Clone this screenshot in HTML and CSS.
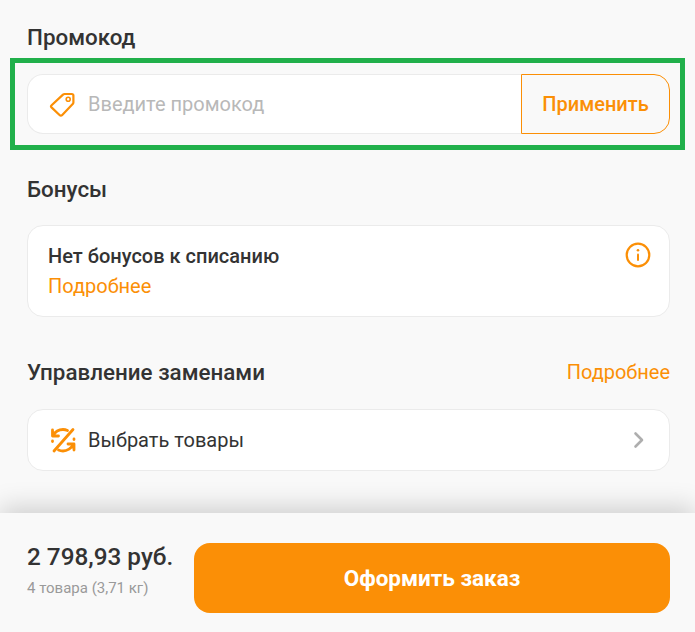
FILE: index.html
```html
<!DOCTYPE html>
<html lang="ru">
<head>
    <meta charset="UTF-8">
    <meta name="viewport" content="width=device-width, initial-scale=1.0">
    <title>Оформление заказа</title>
    <link rel="stylesheet" href="styles.css">
</head>
<body>
    <main class="content">
        <h2 class="title title-promo">Промокод</h2>
        <div class="promo-frame">
            <div class="promo">
                <div class="promo-field">
                    <svg class="icon" width="28" height="28" viewBox="0 0 28 28" fill="none" stroke="#fb8f06" stroke-width="2.200" stroke-linejoin="round">
                        <path d="M2.600 15.200 14 4.600c.5-.4 1-.6 1.600-.6h7.200c.9 0 1.600.7 1.600 1.600v7c0 .6-.2 1.100-.7 1.500L13 25.200c-.6.6-1.600.6-2.200 0l-8.300-7.800c-.6-.6-.5-1.600.1-2.200z"/>
                        <circle cx="19.200" cy="9.300" r="2" stroke-width="1.600"/>
                    </svg>
                    <span class="placeholder">Введите промокод</span>
                </div>
                <button class="apply">Применить</button>
            </div>
        </div>

        <h2 class="title title-bonus">Бонусы</h2>
        <div class="card bonus-card">
            <div>
                <div class="bonus-text">Нет бонусов к списанию</div>
                <a class="link bonus-link">Подробнее</a>
            </div>
            <svg class="info" width="26" height="26" viewBox="0 0 26 26" fill="none">
                <circle cx="13" cy="13" r="11.300" stroke="#fb8f06" stroke-width="2.200"/>
                <rect x="12" y="11.500" width="2" height="7.500" rx="1" fill="#fb8f06"/>
                <circle cx="13" cy="8.300" r="1.300" fill="#fb8f06"/>
            </svg>
        </div>

        <div class="title-row">
            <h2 class="title">Управление заменами</h2>
            <a class="link">Подробнее</a>
        </div>
        <div class="card swap-card">
            <svg class="icon" width="28" height="28" viewBox="0 0 28 28" fill="none" stroke="#fb8f06" stroke-width="2.800" stroke-linecap="round" stroke-linejoin="round">
                <path d="M3.500 10V4M3.500 10h6M4 9.500C6 6 10 3.500 14 3.500c1.500 0 3 .3 4.500 1"/>
                <path d="M25 18v6M25 18h-6M24.500 18.500c-2 3.500-6.500 6.500-10.500 6.500-1.500 0-3-.3-4.500-1"/>
                <path d="M24 3.500 5 25"/>
                <path d="M3.500 15v.5M25 13v.5"/>
            </svg>
            <span class="swap-text">Выбрать товары</span>
            <svg class="chevron" width="12" height="18" viewBox="0 0 12 18" fill="none" stroke="#aeaeae" stroke-width="2.600" stroke-linecap="round" stroke-linejoin="round">
                <path d="M2.500 2.500 9 9l-6.500 6.500"/>
            </svg>
        </div>
    </main>

    <footer class="footer">
        <div class="total">
            <div class="price">2 798,93 руб.</div>
            <div class="weight">4 товара (3,71 кг)</div>
        </div>
        <button class="checkout">Оформить заказ</button>
    </footer>
</body>
</html>
```

FILE: styles.css
```css
* {
    margin: 0;
    padding: 0;
    box-sizing: border-box;
    font-family: 'Roboto', sans-serif;
}

html, body {
    height: 632px;
    overflow: hidden;
}

body {
    display: flex;
    flex-direction: column;
    background: #f9f9f9;
    color: #333333;
}

.content {
    flex: 1;
    padding: 24px 25px 0 27px;
}

.title {
    font-size: 22.400px;
    line-height: 26px;
    font-weight: 500;
    color: #333333;
}

.title-promo {
    margin-bottom: 8px;
}

.promo-frame {
    margin: 0 -15px 0 -17px;
    padding: 11px 10px 11px 12px;
    border: 5px solid #21b04b;
    height: 92px;
}

.promo {
    display: flex;
    height: 60px;
}

.promo-field {
    flex: 1;
    display: flex;
    align-items: center;
    gap: 11px;
    padding-left: 21px;
    background: white;
    border: 1px solid #ebebeb;
    border-right: none;
    border-radius: 16px 0 0 16px;
}

.placeholder {
    font-size: 20px;
    color: #b8b8b8;
}

.apply {
    width: 149px;
    border: 1px solid #fb8f06;
    border-radius: 0 16px 16px 0;
    background: #f9f9f9;
    color: #fb8f06;
    font-size: 20px;
    font-weight: 500;
}

.title-bonus {
    margin-top: 26px;
    margin-bottom: 23px;
}

.card {
    display: flex;
    background: white;
    border: 1px solid #ebebeb;
    border-radius: 16px;
}

.bonus-card {
    height: 92px;
    justify-content: space-between;
    padding: 16px 18px 0 20px;
}

.bonus-text {
    font-size: 20px;
    line-height: 28px;
    font-weight: 500;
}

.bonus-link {
    display: block;
    margin-top: 2px;
    line-height: 28px;
}

.link {
    font-size: 20px;
    color: #fb8f06;
}

.title-row {
    display: flex;
    justify-content: space-between;
    align-items: center;
    margin-top: 42px;
    margin-bottom: 24px;
}

.swap-card {
    height: 62px;
    align-items: center;
    gap: 11px;
    padding: 0 24px 0 21px;
}

.swap-text {
    flex: 1;
    font-size: 20px;
}

.footer {
    height: 119px;
    display: flex;
    align-items: center;
    gap: 20px;
    padding: 11px 25px 0 27px;
    background: #f9f9f9;
    box-shadow: 0 -6px 24px rgba(0,0,0,0.17);
}

.total {
    width: 147px;
    flex: none;
    white-space: nowrap;
    padding-bottom: 17px;
}

.price {
    font-size: 24.300px;
    line-height: 28px;
    font-weight: 500;
}

.weight {
    margin-top: 8px;
    font-size: 15px;
    line-height: 18px;
    color: #9a9a9a;
}

.checkout {
    flex: 1;
    height: 70px;
    border: none;
    border-radius: 16px;
    background: #fb8f06;
    color: white;
    font-size: 22.500px;
    font-weight: 700;
}
```
